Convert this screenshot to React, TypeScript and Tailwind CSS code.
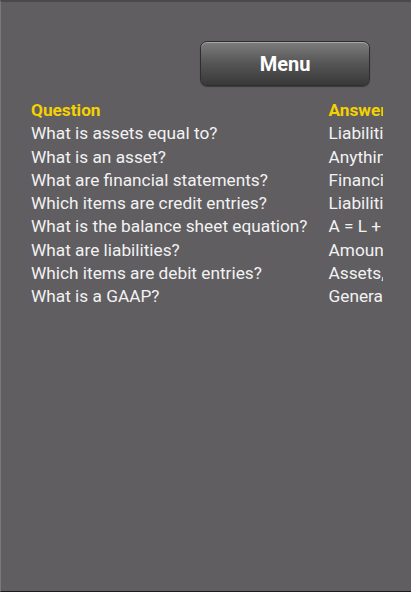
import React from "react";

const rows: [string, string][] = [
  ["What is assets equal to?", "Liabilities + Owner's Equity"],
  ["What is an asset?", "Anything of value owned by the business"],
  ["What are financial statements?", "Financial reports that summarize the business"],
  ["Which items are credit entries?", "Liabilities, Owner's Equity, Revenue"],
  ["What is the balance sheet equation?", "A = L + OE"],
  ["What are liabilities?", "Amounts owed to creditors"],
  ["Which items are debit entries?", "Assets, Expenses, Drawings"],
  ["What is a GAAP?", "Generally Accepted Accounting Principles"],
];

export default function App() {
  return (
    <div
      className="relative w-[411px] h-[592px] overflow-hidden bg-[#605e61] border-l border-l-[#7a787b] border-t-2 border-t-[#4a484b] border-b border-b-[#1c1c1c]"
      style={{ fontFamily: "Roboto, 'Liberation Sans', sans-serif" }}
    >
      <div className="flex justify-end pr-[41px] pt-[39px]">
        <button
          type="button"
          className="w-[170px] h-[45px] rounded-[7px] border border-[#2e2e2e] bg-gradient-to-b from-[#7d7d7d] via-[#555555] to-[#393939] shadow-[inset_0_1px_0_#a8a8a8,0_1px_1px_rgba(0,0,0,0.4)] text-white text-[20px] font-bold"
        >
          Menu
        </button>
      </div>

      <div className="ml-[30px] mr-[28px] mt-[13px] overflow-hidden">
        <table className="border-collapse whitespace-nowrap text-[17.25px] leading-[23.25px]">
          <thead>
            <tr>
              <th className="p-0 pr-[21px] text-left font-bold text-[#f5d100]">Question</th>
              <th className="p-0 text-left font-bold text-[#f5d100]">Answer</th>
            </tr>
          </thead>
          <tbody>
            {rows.map(([q, a]) => (
              <tr key={q}>
                <td className="p-0 pr-[21px] text-[#f2f2f2]">{q}</td>
                <td className="p-0 text-[#f2f2f2]">{a}</td>
              </tr>
            ))}
          </tbody>
        </table>
      </div>
    </div>
  );
}
